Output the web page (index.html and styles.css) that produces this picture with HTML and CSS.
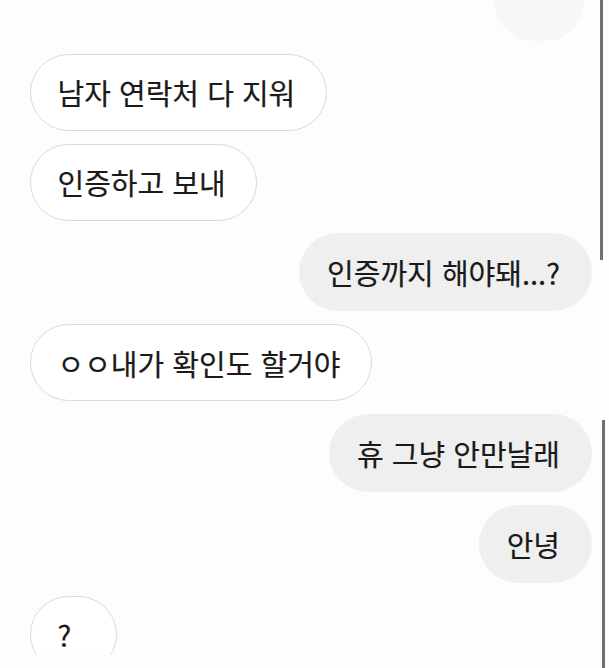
FILE: index.html
```html
<!DOCTYPE html>
<html lang="ko">

<head>
    <meta charset="UTF-8">
    <meta name="viewport" content="width=device-width, initial-scale=1.0">
    <title>대화</title>
    <link rel="stylesheet" href="styles.css">
</head>

<body>
    <div id="screen">
        <div id="chat">
            <div class="bubble me ghost">&nbsp;</div>
            <div class="bubble you">남자 연락처 다 지워</div>
            <div class="bubble you">인증하고 보내</div>
            <div class="bubble me">인증까지 해야돼...?</div>
            <div class="bubble you">ㅇㅇ내가 확인도 할거야</div>
            <div class="bubble me">휴 그냥 안만날래</div>
            <div class="bubble me">안녕</div>
            <div class="bubble you small">?</div>
        </div>
        <!-- 오른쪽 스크롤 막대 -->
        <div class="scroll top"></div>
        <div class="scroll bottom"></div>
    </div>
</body>

</html>
```

FILE: styles.css
```css
* {
    box-sizing: border-box;
}

body {
    margin: 0;
    background: #fdfdfd;
    font-family: 'Noto Sans CJK KR', 'Noto Sans', sans-serif;
    color: #1a1a1a;
}

#screen {
    position: relative;
    width: 609px;
    height: 668px;
    overflow: hidden;
}

#chat {
    height: 655px;
    overflow: hidden;
    display: flex;
    flex-direction: column;
    gap: 12.8px;
    padding: 0 17px 0 30px;
}

.bubble {
    font-size: 29px;
    font-weight: 400;
    line-height: 40px;
    padding: 19px 32px 19px 28px;
    border-radius: 40px;
    white-space: nowrap;
    -webkit-text-stroke: 0.2px #1a1a1a;
}

.you {
    align-self: flex-start;
    background: #ffffff;
    border: 1.5px solid #dadada;
    padding: 17.5px 30.5px 17.5px 26.5px;
}

.me {
    align-self: flex-end;
    background: #efefef;
}

.ghost {
    margin-top: -37px;
    margin-right: 8px;
    width: 90px;
    background: #f7f7f7;
}

.small {
    min-width: 87px;
}

.scroll {
    position: absolute;
    width: 3px;
    background: #707070;
}

.scroll.top {
    left: 600px;
    top: 0;
    height: 260px;
}

.scroll.bottom {
    left: 602px;
    top: 420px;
    height: 248px;
}
```
